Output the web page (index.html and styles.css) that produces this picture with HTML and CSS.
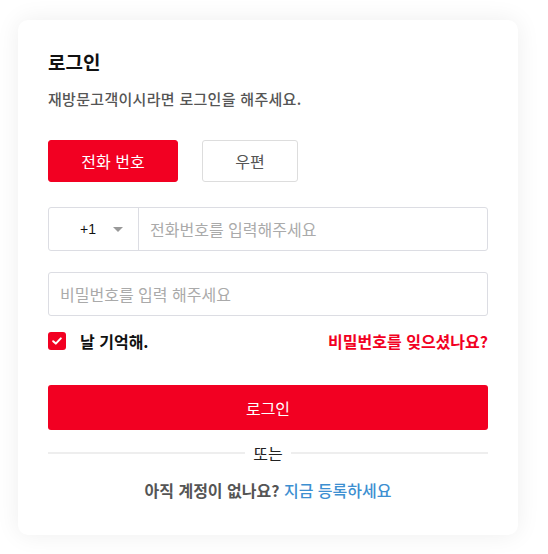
FILE: index.html
```html
<!DOCTYPE html>
<html lang="ko">
<head>
<meta charset="utf-8">
<link rel="stylesheet" href="styles.css">
</head>
<body>
<div class="card">
  <h1 class="title">로그인</h1>
  <p class="subtitle">재방문고객이시라면 로그인을 해주세요.</p>
  <div class="tabs">
    <button class="tab active">전화 번호</button>
    <button class="tab">우편</button>
  </div>
  <div class="field phone">
    <div class="code"><span>+1</span><span class="caret"></span></div>
    <div class="ph">전화번호를 입력해주세요</div>
  </div>
  <div class="field pw">
    <div class="ph">비밀번호를 입력 해주세요</div>
  </div>
  <div class="row">
    <label class="remember">
      <span class="box"><svg width="10" height="8" viewBox="0 0 10 8"><path d="M1.2 4.2 L3.8 6.6 L8.8 1.4" fill="none" stroke="#fff" stroke-width="2" stroke-linecap="round" stroke-linejoin="round"/></svg></span>
      <span>날 기억해.</span>
    </label>
    <a class="forgot">비밀번호를 잊으셨나요?</a>
  </div>
  <button class="login">로그인</button>
  <div class="divider"><span class="line"></span><span class="or">또는</span><span class="line"></span></div>
  <p class="signup">아직 계정이 없나요? <a>지금 등록하세요</a></p>
</div>
</body>
</html>
```
FILE: styles.css
```css
html, body {
  margin: 0;
  padding: 0;
  background: #fff;
}
body {
  padding: 20px 30px 19px 18px;
  font-family: "Noto Sans CJK KR", "Noto Sans", sans-serif;
}
.card {
  width: 500px;
  box-sizing: border-box;
  padding: 30px 30px 35px;
  background: #fff;
  border-radius: 10px;
  box-shadow: 0 0 24px rgba(0, 0, 0, 0.07);
}
.title {
  margin: 0;
  font-size: 19px;
  line-height: 24px;
  font-weight: 700;
  color: #111;
}
.subtitle {
  margin: 15px 0 0;
  font-size: 15px;
  letter-spacing: 0.3px;
  line-height: 20px;
  font-weight: 500;
  color: #555;
}
.tabs {
  display: flex;
  gap: 24px;
  margin-top: 31px;
}
.tab {
  height: 42px;
  border: 1px solid #ddd;
  border-radius: 3px;
  background: #fff;
  color: #555;
  font-family: inherit;
  font-size: 16px;
  padding: 0;
  width: 96px;
}
.tab.active {
  width: 130px;
  background: #f20022;
  border-color: #f20022;
  color: #fff;
}
.field {
  height: 44px;
  box-sizing: border-box;
  border: 1px solid #dcdde3;
  border-radius: 3px;
  display: flex;
  align-items: center;
}
.phone { margin-top: 25px; }
.pw { margin-top: 21px; padding-left: 11px; }
.code {
  width: 90px;
  height: 100%;
  box-sizing: border-box;
  border-right: 1px solid #dcdde3;
  display: flex;
  align-items: center;
  padding-left: 31px;
  font-family: "Liberation Sans", sans-serif;
  font-size: 14px;
  color: #111;
}
.caret {
  margin-left: 17px;
  width: 0;
  height: 0;
  border-left: 5px solid transparent;
  border-right: 5px solid transparent;
  border-top: 5px solid #999;
}
.phone .ph { padding-left: 11px; }
.ph {
  font-size: 16px;
  line-height: 20px;
  color: #aaa;
}
.row {
  display: flex;
  justify-content: space-between;
  align-items: center;
  margin-top: 16px;
  height: 18px;
}
.remember {
  display: flex;
  align-items: center;
  gap: 14px;
  font-size: 16px;
  line-height: 20px;
  font-weight: 700;
  color: #111;
}
.box {
  width: 18px;
  height: 18px;
  border-radius: 3px;
  background: #f20022;
  display: flex;
  align-items: center;
  justify-content: center;
}
.forgot {
  font-size: 16px;
  line-height: 20px;
  font-weight: 700;
  color: #f20022;
}
.login {
  display: block;
  width: 100%;
  height: 45px;
  margin-top: 35px;
  border: none;
  border-radius: 3px;
  background: #f20022;
  color: #fff;
  font-family: inherit;
  font-size: 16px;
}
.divider {
  display: flex;
  align-items: center;
  margin-top: 13px;
  height: 20px;
}
.line {
  flex: 1;
  height: 2px;
  background: #eee;
}
.or {
  padding: 0 8px;
  font-size: 16px;
  line-height: 20px;
  color: #222;
}
.signup {
  margin: 17px 0 0;
  text-align: center;
  font-size: 16px;
  line-height: 20px;
  font-weight: 700;
  color: #555;
}
.signup a {
  color: #3d8fd1;
  font-weight: 500;
}
```
